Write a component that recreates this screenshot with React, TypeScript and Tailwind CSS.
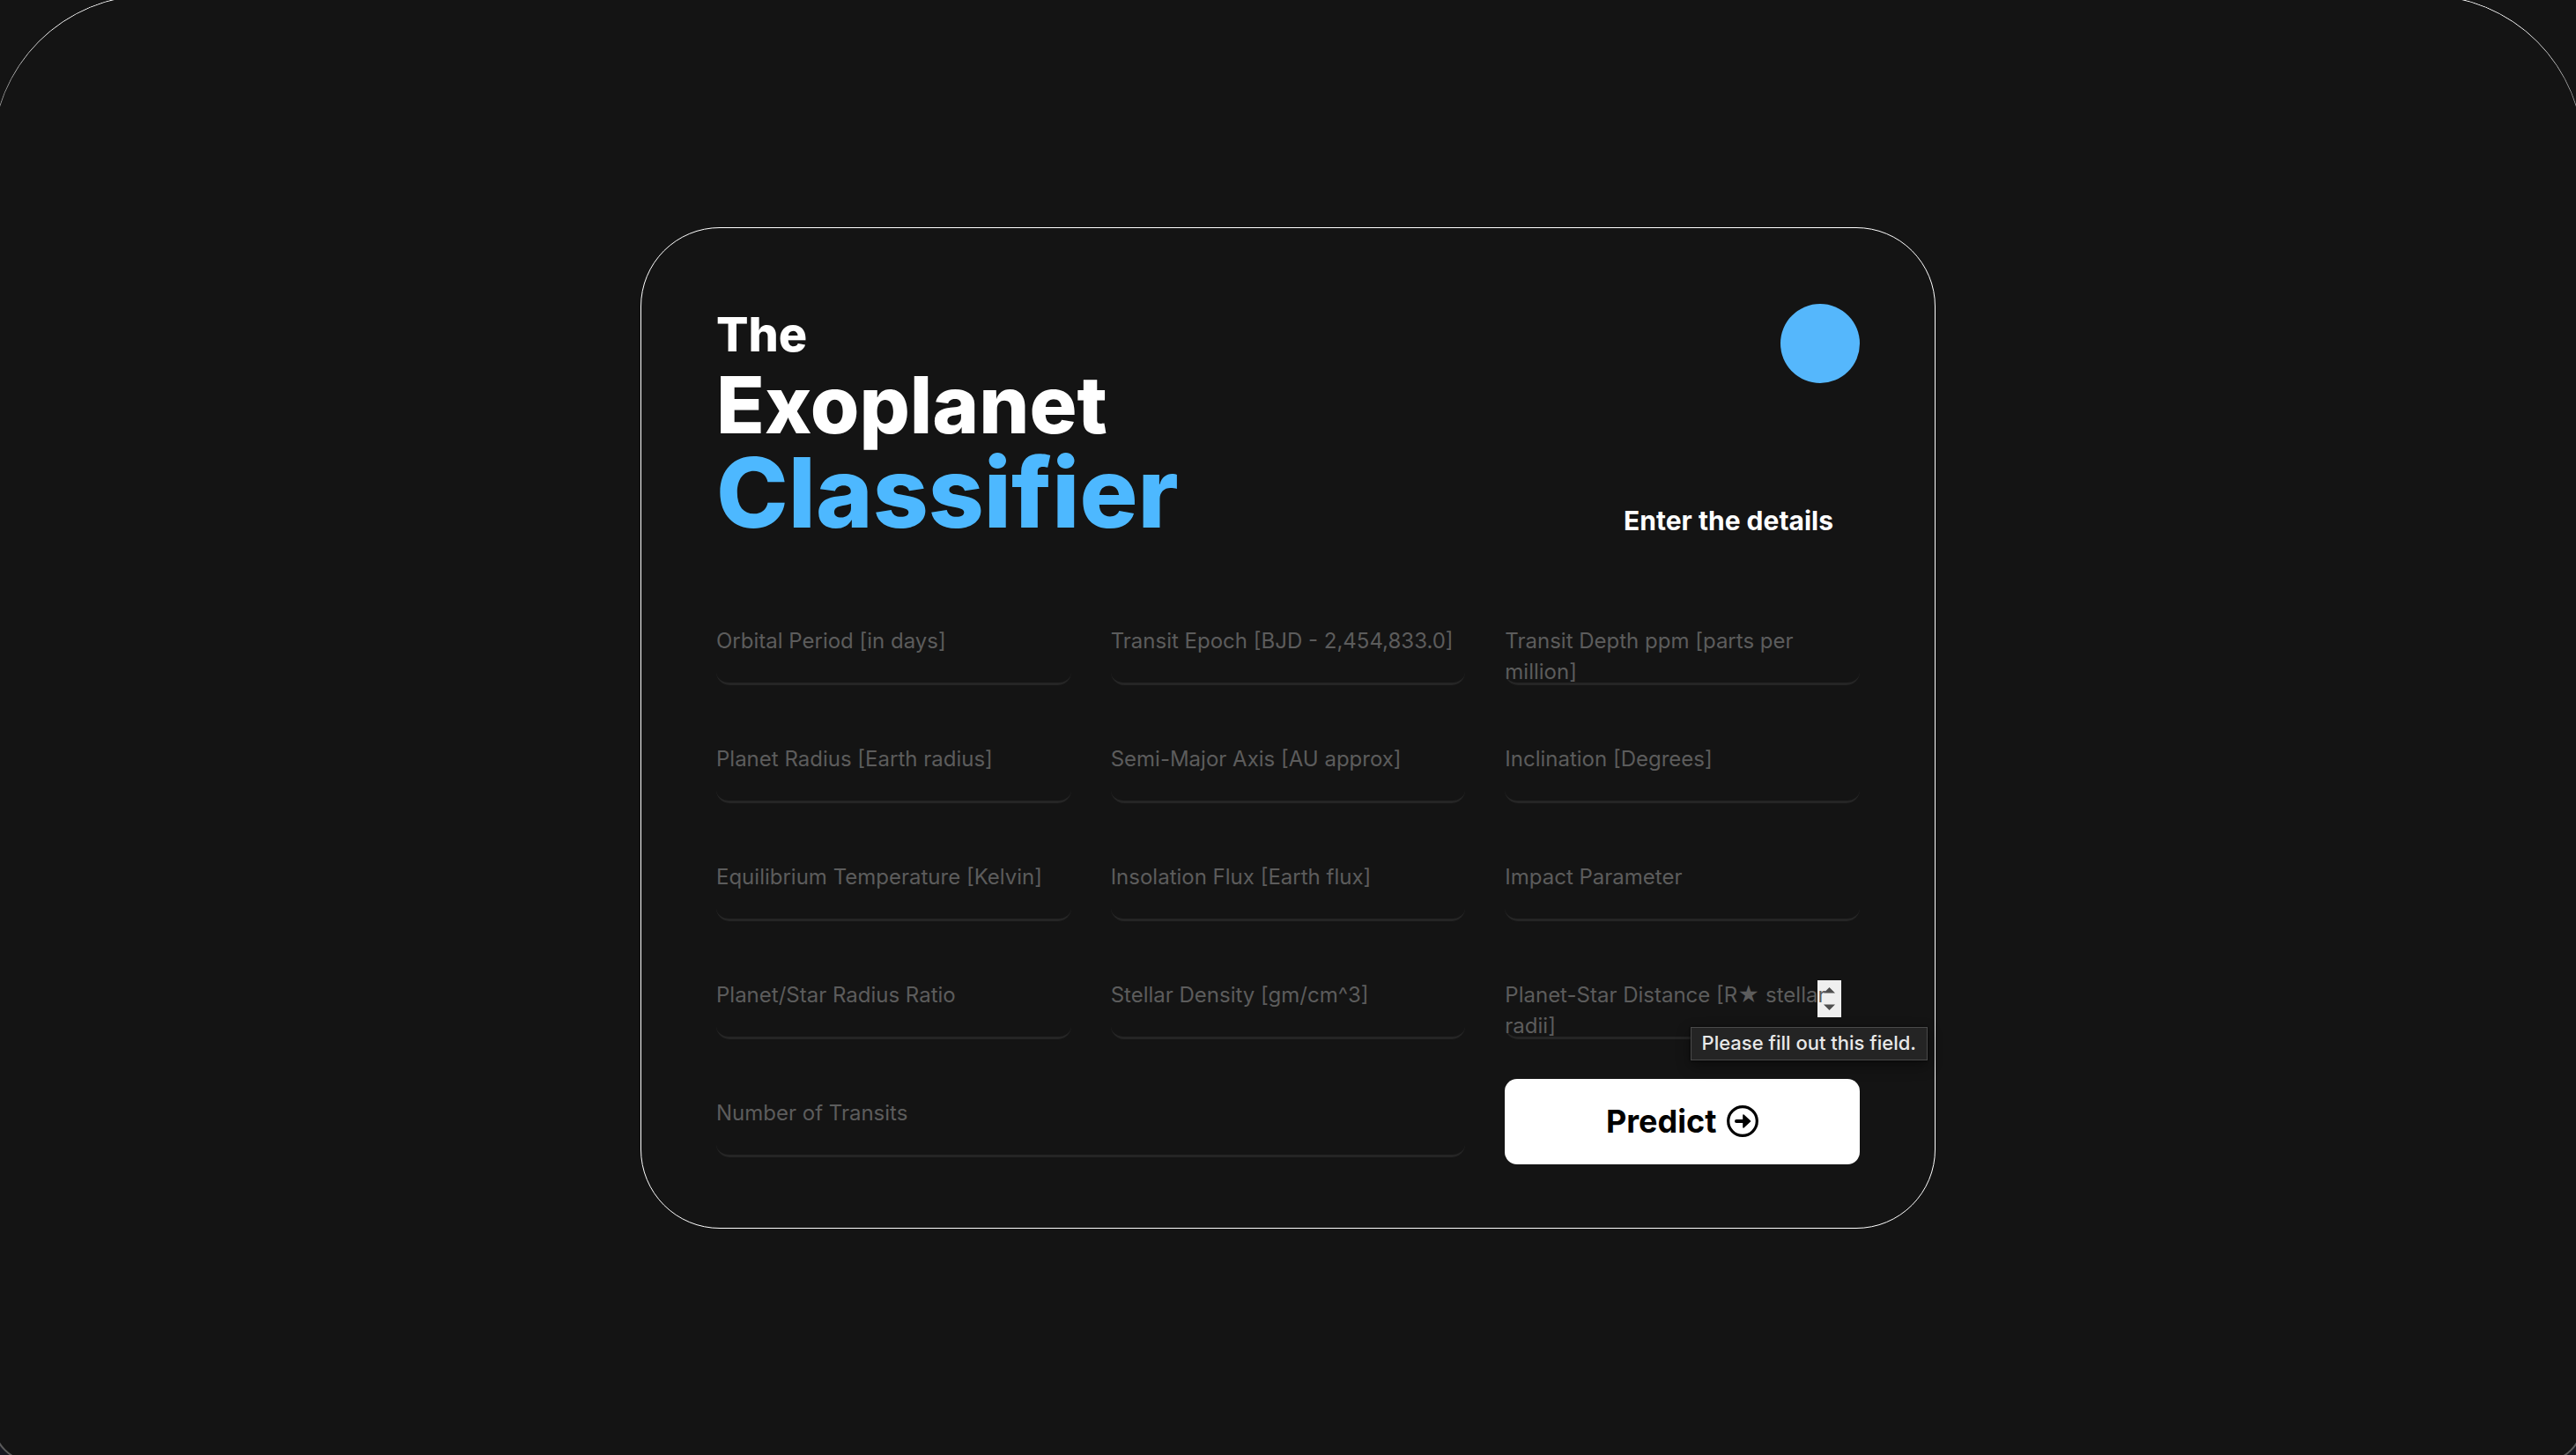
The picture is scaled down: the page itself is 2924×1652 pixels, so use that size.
import React from "react";

type FieldProps = {
  id: string;
  label: string;
  wide?: boolean;
  children?: React.ReactNode;
};

const fields: { id: string; label: string }[] = [
  { id: "period", label: "Orbital Period [in days]" },
  { id: "epoch", label: "Transit Epoch [BJD - 2,454,833.0]" },
  { id: "depth", label: "Transit Depth ppm [parts per million]" },
  { id: "radius", label: "Planet Radius [Earth radius]" },
  { id: "axis", label: "Semi-Major Axis [AU approx]" },
  { id: "inclination", label: "Inclination [Degrees]" },
  { id: "temperature", label: "Equilibrium Temperature [Kelvin]" },
  { id: "flux", label: "Insolation Flux [Earth flux]" },
  { id: "impact", label: "Impact Parameter" },
  { id: "ratio", label: "Planet/Star Radius Ratio" },
  { id: "density", label: "Stellar Density [gm/cm^3]" },
];

function Field({ id, label, wide, children }: FieldProps) {
  return (
    <div className={wide ? "relative col-span-2 grid grid-rows-[89px]" : "relative grid grid-rows-[89px]"}>
      <input
        id={id}
        name={id}
        type="text"
        required
        className="col-start-1 row-start-1 h-full w-full rounded-[15px] border-b-[3px] border-[#252525] bg-transparent px-5 text-2xl text-white outline-none"
      />
      {children}
      <label
        htmlFor={id}
        className="pointer-events-none relative col-start-1 row-start-1 pt-[21px] text-2xl leading-[35px] text-[#5c5c5c]"
      >
        {label}
      </label>
    </div>
  );
}

function Stepper() {
  return (
    <svg
      viewBox="0 0 27 42"
      className="absolute top-[22px] right-[21px] h-[42px] w-[27px]"
      aria-hidden="true"
    >
      <rect width="27" height="42" fill="#efefef" />
      <path d="M13.5 8l6.5 6.5H7z M13.5 34l6.5-6.5H7z" fill="#4f4f4f" />
    </svg>
  );
}

function ArrowCircle() {
  return (
    <svg viewBox="0 0 36 36" className="size-9" fill="none" stroke="#000" aria-hidden="true">
      <circle cx="18" cy="18" r="16.3" strokeWidth="3.2" />
      <path d="M11 18h9" strokeWidth="4" strokeLinecap="round" />
      <path d="M19 11l7.5 7-7.5 7z" fill="#000" strokeWidth="1.6" strokeLinejoin="round" />
    </svg>
  );
}

export default function App() {
  return (
    <main className="relative flex min-h-screen items-center justify-center overflow-hidden bg-[#141414] font-['Inter',sans-serif] text-white">
      <div className="pointer-events-none absolute -inset-x-[9px] -top-[6px] -bottom-[300px] rounded-[180px] border border-white [mask-image:linear-gradient(to_bottom,#fff_0,#fff_30px,#fff8_110px,#fff8_100%)]" />
      <div className="pointer-events-none absolute inset-x-0 bottom-0 h-6 overflow-hidden">
        <div className="absolute -inset-x-2 -bottom-2 h-[80px] rounded-b-[44px] border-2 border-[#5a5a5a] shadow-[0_0_0_30px_#171821]" />
      </div>
      <section className="relative w-full max-w-[1470px] rounded-[90px] border border-white px-[85px] pt-[86px] pb-[72px]">
        <header className="flex justify-between">
          <h1 className="font-extrabold">
            <span className="block text-[54px] leading-[70px]">The</span>
            <span className="block text-[90px] leading-[89px]">Exoplanet</span>
            <span className="block text-[110px] leading-[111px] text-[#4db8ff]">Classifier</span>
          </h1>
          <div className="flex flex-col items-end justify-between">
            <span className="size-[90px] rounded-full bg-[#55b7fc]" />
            <h2 className="mr-[30px] text-[30px] leading-[48px] font-bold">Enter the details</h2>
          </div>
        </header>
        <form className="mt-[74px] grid grid-cols-3 gap-[45px]">
          {fields.map((f) => (
            <Field key={f.id} id={f.id} label={f.label} />
          ))}
          <Field id="distance" label="Planet-Star Distance [R★ stellar radii]">
            <Stepper />
            <div
              role="tooltip"
              className="absolute top-[75px] -right-[77px] z-10 flex h-[38px] items-center border border-[#4a4a4a] bg-[#242424] px-3 text-[22px] font-medium whitespace-nowrap text-[#e8e8e8] shadow-[0_0_2px_#000,0_6px_16px_#0006]"
            >
              Please fill out this field.
            </div>
          </Field>
          <Field id="transits" label="Number of Transits" wide />
          <button
            type="submit"
            className="flex h-[97px] items-center justify-center gap-3 rounded-[14px] bg-white text-[36px] font-bold text-black"
          >
            Predict
            <ArrowCircle />
          </button>
        </form>
      </section>
    </main>
  );
}
